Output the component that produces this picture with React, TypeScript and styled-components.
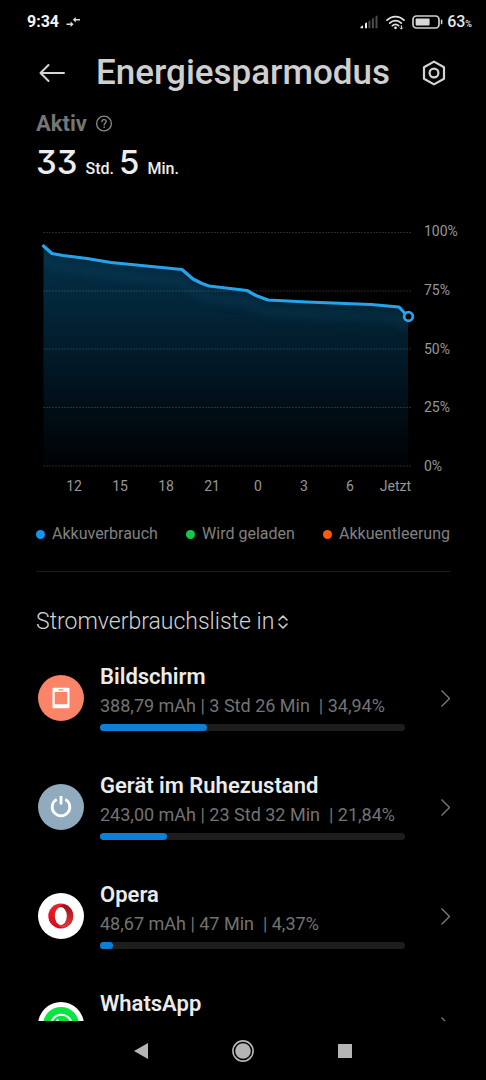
import React from "react";
import styled, { createGlobalStyle } from "styled-components";

const GlobalStyle = createGlobalStyle`
  *, *::before, *::after { box-sizing: border-box; }
  body {
    margin: 0;
    background: #000;
    color: #e8e8e8;
    font-family: Roboto, "Noto Sans", sans-serif;
  }
  button, a { font: inherit; color: inherit; }
`;

const Screen = styled.div`
  display: flex;
  flex-direction: column;
  height: 100vh;
  background: #000;
`;

const StatusBar = styled.div`
  flex: none;
  display: flex;
  align-items: center;
  justify-content: space-between;
  height: 44px;
  padding: 0 14px 0 27px;
`;

const StatusGroup = styled.div<{ $gap: number }>`
  display: flex;
  align-items: center;
  gap: ${(p) => p.$gap}px;
`;

const Clock = styled.time`
  font-size: 16px;
  line-height: 20px;
  font-weight: 700;
  color: #f4f4f4;
`;

const BatteryLevel = styled.span`
  font-size: 16px;
  line-height: 20px;
  font-weight: 500;
  color: #e8e8e8;
  small { font-size: 9px; line-height: 0; }
`;

const Header = styled.header`
  flex: none;
  display: flex;
  align-items: center;
  justify-content: space-between;
  height: 58px;
  padding: 0 36px;
`;

const Title = styled.h1`
  margin: 0;
  font-size: 35px;
  line-height: 44px;
  font-weight: 500;
  color: #cfcfcf;
`;

const IconButton = styled.button`
  display: flex;
  align-items: center;
  justify-content: center;
  width: 32px;
  height: 32px;
  padding: 0;
  border: 0;
  background: none;
`;

const Scroller = styled.main`
  flex: 1;
  min-height: 0;
  overflow: hidden auto;
  scrollbar-width: none;
`;

const Summary = styled.section`
  padding: 8px 36px 0;
`;

const Label = styled.h2`
  display: flex;
  align-items: center;
  gap: 8px;
  margin: 0;
  font-size: 22px;
  line-height: 28px;
  font-weight: 700;
  color: #757575;
`;

const HelpButton = styled(IconButton)`
  width: 18px;
  height: 18px;
`;

const Duration = styled.p`
  display: flex;
  align-items: baseline;
  height: 44px;
  margin: 2px 0 0;
  line-height: 44px;
  color: #ededed;
`;

const Amount = styled.span`
  font-family: Inter, Roboto, sans-serif;
  font-feature-settings: "cv09";
  font-size: 33px;
  font-weight: 500;
`;

const Unit = styled.span`
  margin: 0 5px 0 8px;
  font-size: 16px;
  font-weight: 500;
`;

const ChartArea = styled.section`
  display: grid;
  grid-template-columns: 1fr 34px;
  column-gap: 13px;
  padding: 48px 28px 0 43px;
`;

const Plot = styled.svg`
  display: block;
  width: 100%;
  height: auto;
  overflow: visible;
`;

const PercentAxis = styled.div`
  display: flex;
  flex-direction: column;
  justify-content: space-between;
  margin: -9px 0 -7px;
  font-size: 14px;
  line-height: 16px;
  color: #979797;
`;

const HourAxis = styled.div`
  display: grid;
  grid-template-columns: repeat(7, 1fr) 38px;
  padding: 11px 0 0 8px;
  font-size: 14px;
  line-height: 16px;
  text-align: center;
  color: #979797;
  span:last-child { justify-self: end; }
`;

const Legend = styled.ul`
  display: flex;
  justify-content: space-between;
  margin: 30px 36px 0;
  padding: 0;
  list-style: none;
  font-size: 16px;
  line-height: 20px;
  color: #808080;
`;

const LegendItem = styled.li<{ $color: string }>`
  display: flex;
  align-items: center;
  gap: 7px;
  &::before {
    content: "";
    width: 9px;
    height: 9px;
    border-radius: 50%;
    background: ${(p) => p.$color};
  }
`;

const Divider = styled.hr`
  height: 1px;
  margin: 27px 36px 0;
  border: 0;
  background: #1c1c1c;
`;

const SortButton = styled.button`
  display: flex;
  align-items: center;
  gap: 4px;
  margin: 36px 36px 0;
  padding: 0;
  border: 0;
  background: none;
  font-size: 23px;
  line-height: 28px;
  font-weight: 350;
  color: #d2d2d2;
`;

const UsageList = styled.ul`
  display: flex;
  flex-direction: column;
  gap: 43px;
  margin: 0;
  padding: 29px 36px 42px 38px;
  list-style: none;
`;

const UsageLink = styled.a`
  display: grid;
  grid-template-columns: 46px 1fr 9px;
  align-items: center;
  column-gap: 16px;
  text-decoration: none;
`;

const UsageBody = styled.div`
  padding-right: 20px;
`;

const AppName = styled.div`
  font-size: 22px;
  line-height: 24px;
  font-weight: 600;
  color: #ebebeb;
`;

const Details = styled.div`
  margin: 5px 0 6px;
  font-size: 18px;
  line-height: 24px;
  white-space: pre;
  color: #737373;
`;

const Track = styled.div`
  height: 7px;
  border-radius: 4px;
  background: #1d1d1d;
`;

const Fill = styled.div`
  height: 100%;
  border-radius: 4px;
  background: #0d7fd4;
`;

const NavBar = styled.nav`
  flex: none;
  display: flex;
  align-items: center;
  justify-content: center;
  gap: 70px;
  height: 59px;
`;

const BackArrow = () => (
  <svg width="26" height="20" viewBox="0 0 26 20" fill="none" stroke="#d4d4d4" strokeWidth="2" strokeLinecap="round" strokeLinejoin="round">
    <path d="M9.5 2 1.5 10l8 8M1.5 10H25" />
  </svg>
);

const SettingsIcon = () => (
  <svg width="24" height="26" viewBox="0 0 24 26" fill="none" stroke="#d4d4d4" strokeWidth="2.2" strokeLinejoin="round">
    <path d="M12 1.6 22 7.2v11.6L12 24.4 2 18.8V7.2z" />
    <circle cx="12" cy="13" r="4.4" />
  </svg>
);

const SyncArrows = () => (
  <svg width="15" height="12" viewBox="0 0 15 12" fill="none" stroke="#dcdcdc" strokeWidth="1.5">
    <path d="M0.5 8.2H6M14 3.8H8.5" />
    <path d="M4.6 5.4v5.6L7.6 8.2zM9.8 1V6.6L6.8 3.8z" fill="#dcdcdc" stroke="none" />
  </svg>
);

const SignalIcon = () => (
  <svg width="19" height="14" viewBox="0 0 19 14">
    <path d="M0.5 13.3V12l2.600-1.800v3.100zM5 8.600l2-1.300v6H5z" fill="#f0f0f0" />
    <path d="M8.400 6.200l2-1.300v8.400h-2zM11.900 3.900l2-1.300v10.700h-2zM15.500 1.600l2-1.300v13h-2z" fill="#4c4c4c" />
  </svg>
);

const WifiIcon = () => (
  <svg width="19" height="15" viewBox="0 0 19 15" fill="none" stroke="#e2e2e2" strokeWidth="1.7" strokeLinecap="round">
    <path d="M1 5.2C5.8 0.4 13.2 0.4 18 5.2M3.7 8.1c3.3-3.2 8.3-3.2 11.6 0M6.4 10.7c1.9-1.7 4.3-1.7 6.2 0" />
    <circle cx="9.5" cy="12.8" r="1.4" fill="#e2e2e2" stroke="none" />
    <path d="M15.4 10.6v3.2M14.2 12.9l1.2 1.2 1.2-1.2" strokeWidth="1" />
  </svg>
);

const BatteryIcon = () => (
  <svg width="31" height="14" viewBox="0 0 31 14">
    <rect x="1" y="1" width="26" height="12" rx="3.4" fill="none" stroke="#cfcfcf" strokeWidth="1.7" />
    <rect x="3.6" y="3.6" width="14" height="6.8" rx="0.8" fill="#d8d8d8" />
    <rect x="28.8" y="4.6" width="1.6" height="4.8" rx="0.8" fill="#cfcfcf" />
  </svg>
);

const HelpIcon = () => (
  <svg width="18" height="18" viewBox="0 0 18 18" fill="none" stroke="#8a8a8a" strokeWidth="1.3" strokeLinecap="round">
    <circle cx="9" cy="8.500" r="7.400" />
    <path d="M6.900 6.700c0-2.800 4.300-2.700 4.300-0.200C11.200 8 9.100 8.100 9.100 10" />
    <circle cx="9.100" cy="12.200" r="0.500" fill="#8a8a8a" strokeWidth="0.600" />
  </svg>
);

const SortIcon = () => (
  <svg width="10" height="14" viewBox="0 0 10 14" fill="none" stroke="#cecece" strokeWidth="1.6" strokeLinecap="round" strokeLinejoin="round">
    <path d="M1 5 5 1l4 4M1 9l4 4 4-4" />
  </svg>
);

const Chevron = () => (
  <svg width="9" height="17" viewBox="0 0 9 17" fill="none" stroke="#7c7c7c" strokeWidth="1.3">
    <path d="M0.500 0.500 8.500 8.500 0.500 16.500" />
  </svg>
);

const ScreenIcon = () => (
  <svg width="46" height="46" viewBox="0 0 46 46">
    <circle cx="23" cy="23" r="23" fill="#f98467" />
    <path fillRule="evenodd" fill="#fff" d="M15.500 12.800h15a1 1 0 0 1 1 1v18.400a1 1 0 0 1-1 1h-15a1 1 0 0 1-1-1V13.800a1 1 0 0 1 1-1zM16.700 17v12.300h12.600V17zM20.700 14.200v1.400h4.600v-1.400z" />
  </svg>
);

const PowerIcon = () => (
  <svg width="46" height="46" viewBox="0 0 46 46">
    <circle cx="23" cy="23" r="23" fill="#90abbe" />
    <g fill="none" stroke="#fff" strokeWidth="2.800">
      <path d="M18.700 15.400a8.800 8.800 0 1 0 8.600 0M23 12v8.500" />
    </g>
  </svg>
);

const OperaIcon = () => (
  <svg width="46" height="46" viewBox="0 0 46 46">
    <defs>
      <linearGradient id="operaRing" x1="0" y1="0" x2="0" y2="1">
        <stop offset="0" stopColor="#f3202c" />
        <stop offset="1" stopColor="#d40b1d" />
      </linearGradient>
      <linearGradient id="operaShade" x1="0" y1="0" x2="0" y2="1">
        <stop offset="0" stopColor="#94101a" />
        <stop offset="1" stopColor="#e33a40" />
      </linearGradient>
    </defs>
    <circle cx="23" cy="23" r="23" fill="#fff" />
    <circle cx="22.800" cy="23" r="12.500" fill="url(#operaRing)" />
    <path d="M20.500 14.200c3-3.600 6.600-3.400 9.500-1.300a12.500 12.500 0 0 1 0 20.200c-2.900 2.100-6.500 2.300-9.500-1.300z" fill="url(#operaShade)" />
    <ellipse cx="22.800" cy="23" rx="6" ry="8.900" fill="#fff" />
  </svg>
);

const WhatsAppIcon = () => (
  <svg width="46" height="46" viewBox="0 0 46 46">
    <circle cx="23" cy="23" r="23" fill="#fff" />
    <circle cx="23" cy="23" r="18" fill="#09e443" />
    <path d="M12.500 33.500 14.200 27.700A10.300 10.300 0 1 1 18.200 31.900z" fill="none" stroke="#fff" strokeWidth="2" />
    <path d="M18.700 17.600c.7-.7 1.500-.5 1.800.2l.9 2.100c.2.500-.8 1.500-.8 1.800.9 1.800 2.200 3 4 3.700.5 0 1.200-1.500 1.700-1.300l2.200 1.100c.6.300.1 2-.8 2.500-4.200 2.300-11.600-5-9-10.100z" fill="#fff" />
  </svg>
);

const LINE = "M0.500 14 9 21.500 20 23.500 44 26.500 68 30.500 139 37.500 150 47 159 51.500 166 54 204 58.500 213 63.500 225 68 264 70 328 72.500 356 75 365 84.500";

const BatteryPlot = () => (
  <Plot viewBox="0 0 368 235" role="img" aria-label="Akkuverlauf">
    <defs>
      <linearGradient id="fade" x1="0" y1="14" x2="0" y2="234" gradientUnits="userSpaceOnUse">
        <stop offset="0" stopColor="#04304a" />
        <stop offset="0.300" stopColor="#032437" />
        <stop offset="0.650" stopColor="#01121d" />
        <stop offset="1" stopColor="#000204" />
      </linearGradient>
      <clipPath id="area">
        <path d={`${LINE}V234H0.500Z`} />
      </clipPath>
      <filter id="soften" x="-10%" y="-30%" width="120%" height="160%">
        <feGaussianBlur stdDeviation="4" />
      </filter>
    </defs>
    <g clipPath="url(#area)">
      <rect width="368" height="235" fill="url(#fade)" />
      <path d={LINE} transform="translate(0 12)" fill="none" stroke="#0d4a60" strokeWidth="9" opacity="0.300" filter="url(#soften)" />
    </g>
    {[0.5, 59, 117, 175.5, 234].map((y) => (
      <path key={y} d={`M0 ${y}H368`} stroke="#8fa0a8" strokeOpacity="0.250" strokeDasharray="2 1" />
    ))}
    <path d={LINE} fill="none" stroke="#27a3ea" strokeWidth="3.200" strokeLinecap="round" strokeLinejoin="round" />
    <circle cx="365.500" cy="84.500" r="4.300" fill="#000" stroke="#27a3ea" strokeWidth="2.800" />
  </Plot>
);

const USAGE = [
  { name: "Bildschirm", details: "388,79 mAh | 3 Std 26 Min  | 34,94%", share: 34.94, Icon: ScreenIcon },
  { name: "Gerät im Ruhezustand", details: "243,00 mAh | 23 Std 32 Min  | 21,84%", share: 21.84, Icon: PowerIcon },
  { name: "Opera", details: "48,67 mAh | 47 Min  | 4,37%", share: 4.37, Icon: OperaIcon },
  { name: "WhatsApp", details: "", share: 0, Icon: WhatsAppIcon },
];

export default function App() {
  return (
    <Screen>
      <GlobalStyle />
      <StatusBar>
        <StatusGroup $gap={7}>
          <Clock>9:34</Clock>
          <SyncArrows />
        </StatusGroup>
        <StatusGroup $gap={4}>
          <StatusGroup $gap={7}>
            <SignalIcon />
            <WifiIcon />
            <BatteryIcon />
          </StatusGroup>
          <BatteryLevel>63<small>%</small></BatteryLevel>
        </StatusGroup>
      </StatusBar>
      <Header>
        <IconButton aria-label="Zurück"><BackArrow /></IconButton>
        <Title>Energiesparmodus</Title>
        <IconButton aria-label="Einstellungen"><SettingsIcon /></IconButton>
      </Header>
      <Scroller>
        <Summary>
          <Label>
            Aktiv
            <HelpButton aria-label="Hilfe"><HelpIcon /></HelpButton>
          </Label>
          <Duration>
            <Amount>33</Amount>
            <Unit>Std.</Unit>
            <Amount>5</Amount>
            <Unit>Min.</Unit>
          </Duration>
        </Summary>
        <ChartArea>
          <BatteryPlot />
          <PercentAxis>
            {["100%", "75%", "50%", "25%", "0%"].map((t) => <span key={t}>{t}</span>)}
          </PercentAxis>
          <HourAxis>
            {["12", "15", "18", "21", "0", "3", "6", "Jetzt"].map((t) => <span key={t}>{t}</span>)}
          </HourAxis>
        </ChartArea>
        <Legend>
          <LegendItem $color="#1296f5">Akkuverbrauch</LegendItem>
          <LegendItem $color="#12c94a">Wird geladen</LegendItem>
          <LegendItem $color="#ff5a0a">Akkuentleerung</LegendItem>
        </Legend>
        <Divider />
        <SortButton>
          Stromverbrauchsliste in
          <SortIcon />
        </SortButton>
        <UsageList>
          {USAGE.map(({ name, details, share, Icon }) => (
            <li key={name}>
              <UsageLink href="#">
                <Icon />
                <UsageBody>
                  <AppName>{name}</AppName>
                  <Details>{details || " "}</Details>
                  <Track>
                    <Fill style={{ width: `${share}%` }} />
                  </Track>
                </UsageBody>
                <Chevron />
              </UsageLink>
            </li>
          ))}
        </UsageList>
      </Scroller>
      <NavBar>
        <IconButton aria-label="Zurück">
          <svg width="16" height="18" viewBox="0 0 16 18"><path d="M15 1v16L1 9z" fill="#b5b5b5" /></svg>
        </IconButton>
        <IconButton aria-label="Startseite">
          <svg width="22" height="22" viewBox="0 0 22 22">
            <circle cx="11" cy="11" r="10.100" fill="none" stroke="#b5b5b5" strokeWidth="1.600" />
            <circle cx="11" cy="11" r="7.800" fill="#b5b5b5" />
          </svg>
        </IconButton>
        <IconButton aria-label="Letzte Apps">
          <svg width="14" height="14" viewBox="0 0 14 14"><path d="M0 0h14v14H0z" fill="#b5b5b5" /></svg>
        </IconButton>
      </NavBar>
    </Screen>
  );
}
